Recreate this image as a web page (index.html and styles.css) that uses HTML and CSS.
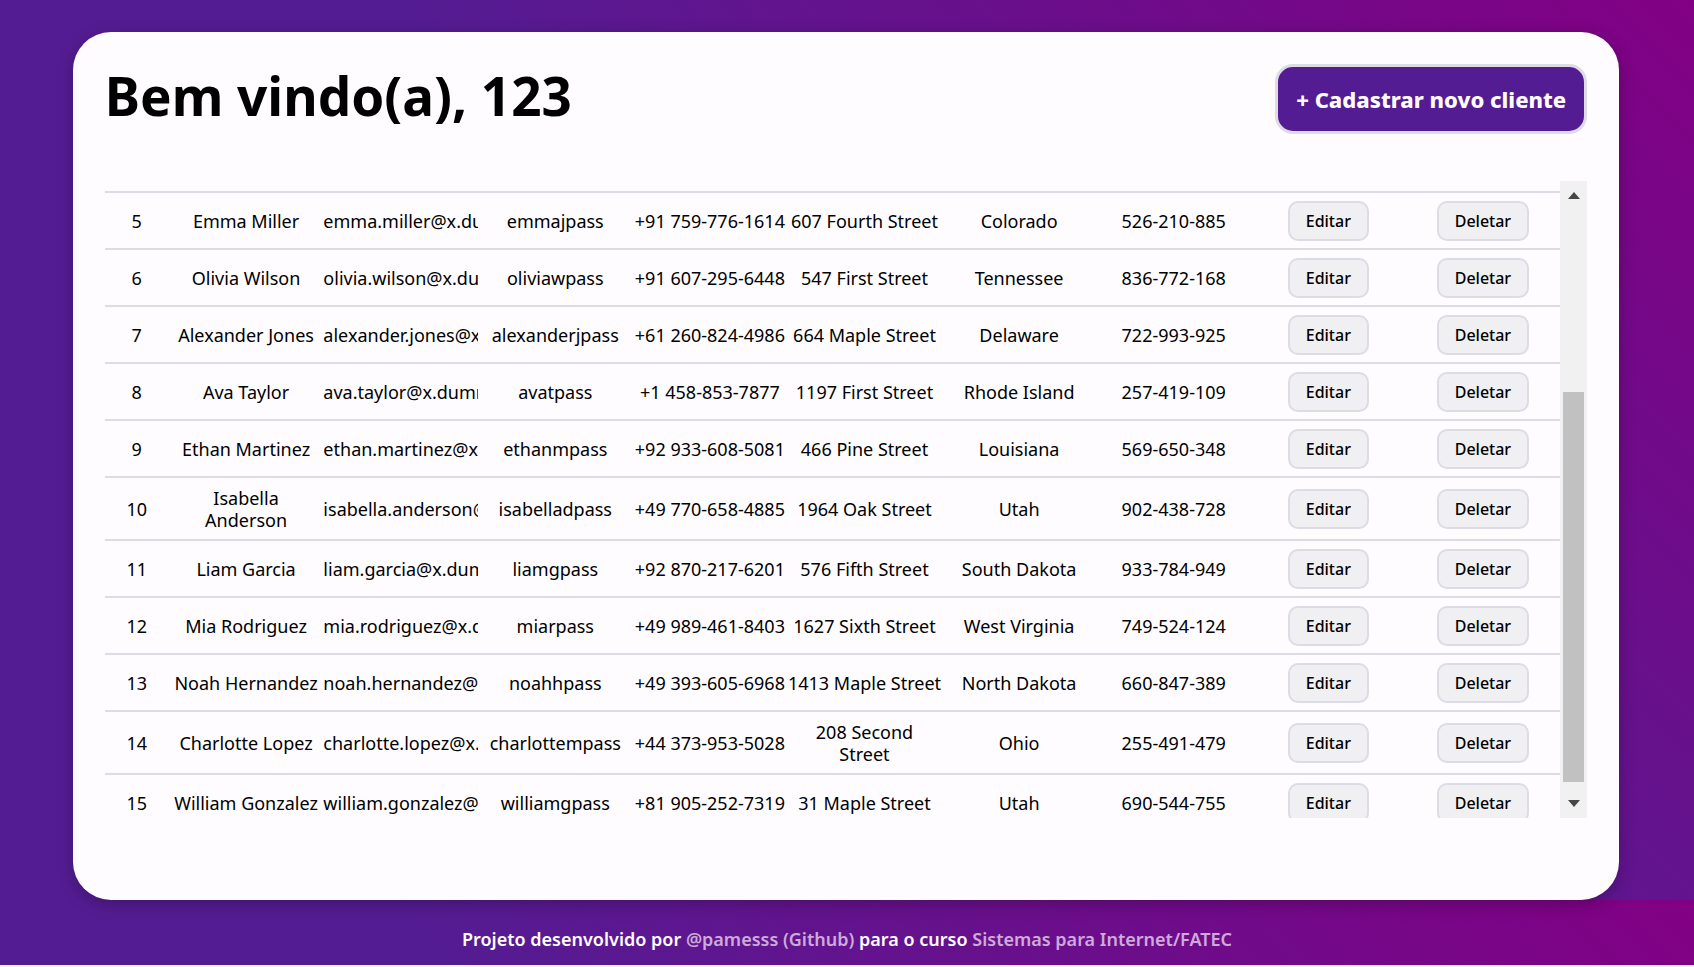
FILE: index.html
```html
<!DOCTYPE html>
<html lang="pt-BR">
<head>
<meta charset="utf-8">
<title>Clientes</title>
<link rel="stylesheet" href="styles.css">
</head>
<body>
<main class="stage">
  <section class="card">
    <header class="card-header">
      <h1 class="title">Bem vindo(a), 123</h1>
      <button class="add-button" type="button">+ Cadastrar novo cliente</button>
    </header>
    <div class="list">
      <div class="viewport">
        <table class="clients">
          <colgroup><col class="col-id"><col span="9"></colgroup>
          <tbody id="rows"></tbody>
        </table>
      </div>
      <div class="scrollbar" aria-hidden="true">
        <svg class="arrow" viewBox="0 0 12 7"><path d="M0 7 6 0l6 7z"/></svg>
        <div class="track"><div class="thumb"></div></div>
        <svg class="arrow" viewBox="0 0 12 7"><path d="M0 0h12L6 7z"/></svg>
      </div>
    </div>
  </section>
</main>
<footer class="footer">
  <p>Projeto desenvolvido por <a href="#">@pamesss (Github)</a> para o curso <a href="#">Sistemas para Internet/FATEC</a></p>
</footer>
<script src="app.js"></script>
</body>
</html>
```

FILE: styles.css
```css
* { box-sizing: border-box; }

body {
  margin: 0;
  height: 100vh;
  display: flex;
  flex-direction: column;
  background: linear-gradient(45deg, #541c92 50%, #820084) 0 0 / 100% calc(100vh - 67px);
  font-family: "Noto Sans", "Open Sans", sans-serif;
  font-size: 18px;
  color: #000;
}

.stage {
  flex: 1;
  min-height: 0;
  display: flex;
  justify-content: center;
  padding: 32px 2px 0 0;
}

.card {
  width: 91.4%;
  display: flex;
  flex-direction: column;
  padding: 32px 32px 82px;
  border-radius: 38px;
  background: #fefcff;
  box-shadow: 0 4px 16px rgba(0, 0, 0, 0.25);
}

.card-header {
  display: flex;
  justify-content: space-between;
  align-items: flex-start;
  margin-bottom: 47px;
}

.title {
  margin: 0;
  font-size: 53px;
  line-height: 64px;
}

.add-button {
  height: 70px;
  padding: 0 18px;
  border: 3px solid #dddbe3;
  border-radius: 18px;
  background: #541c92;
  color: #fefcff;
  font: 800 22px/28px "Noto Sans", "Open Sans", sans-serif;
}

.list {
  flex: 1;
  min-height: 0;
  display: flex;
}

.viewport {
  flex: 1;
  overflow: hidden;
  padding-top: 10px;
}

.clients {
  width: 100%;
  table-layout: fixed;
  border-collapse: collapse;
}

.col-id { width: 64px; }

.clients td {
  height: 57px;
  padding: 0;
  border-top: 2px solid #dddbe3;
  text-align: center;
  line-height: 22px;
  white-space: nowrap;
}

.clients tr.tall td { height: 63px; }

.clients td.email {
  overflow: hidden;
  text-align: left;
}

.row-button {
  height: 40px;
  padding: 0 16px;
  border: 2px solid #dddbe3;
  border-radius: 10px;
  background: #f0f0f2;
  color: #000;
  font: 500 16px "Noto Sans", "Open Sans", sans-serif;
}

.scrollbar {
  width: 27px;
  display: flex;
  flex-direction: column;
  align-items: center;
  justify-content: space-between;
  padding: 11px 0;
  background: #f1f1f1;
}

.arrow {
  width: 12px;
  height: 7px;
  fill: #464646;
}

.track {
  flex: 1;
  width: 21px;
  margin: 18px 0;
  display: flex;
  align-items: flex-end;
}

.thumb {
  width: 100%;
  height: 69%;
  background: #c1c1c1;
}

.footer {
  height: 67px;
  padding-top: 28px;
  border-bottom: 2px solid #f4f4f4;
  color: #fefcff;
  font-weight: 600;
  text-align: center;
}

.footer p { margin: 0; line-height: 22px; }
.footer a { color: #ceaadb; text-decoration: none; }
```

FILE: app.js
```js
const clients = [
  [5, "Emma Miller", "emma.miller@x.dummyjson.com", "emmajpass", "+91 759-776-1614", "607 Fourth Street", "Colorado", "526-210-885"],
  [6, "Olivia Wilson", "olivia.wilson@x.dummyjson.com", "oliviawpass", "+91 607-295-6448", "547 First Street", "Tennessee", "836-772-168"],
  [7, "Alexander Jones", "alexander.jones@x.dummyjson.com", "alexanderjpass", "+61 260-824-4986", "664 Maple Street", "Delaware", "722-993-925"],
  [8, "Ava Taylor", "ava.taylor@x.dummyjson.com", "avatpass", "+1 458-853-7877", "1197 First Street", "Rhode Island", "257-419-109"],
  [9, "Ethan Martinez", "ethan.martinez@x.dummyjson.com", "ethanmpass", "+92 933-608-5081", "466 Pine Street", "Louisiana", "569-650-348"],
  [10, "Isabella<br>Anderson", "isabella.anderson@x.dummyjson.com", "isabelladpass", "+49 770-658-4885", "1964 Oak Street", "Utah", "902-438-728"],
  [11, "Liam Garcia", "liam.garcia@x.dummyjson.com", "liamgpass", "+92 870-217-6201", "576 Fifth Street", "South Dakota", "933-784-949"],
  [12, "Mia Rodriguez", "mia.rodriguez@x.dummyjson.com", "miarpass", "+49 989-461-8403", "1627 Sixth Street", "West Virginia", "749-524-124"],
  [13, "Noah Hernandez", "noah.hernandez@x.dummyjson.com", "noahhpass", "+49 393-605-6968", "1413 Maple Street", "North Dakota", "660-847-389"],
  [14, "Charlotte Lopez", "charlotte.lopez@x.dummyjson.com", "charlottempass", "+44 373-953-5028", "208 Second<br>Street", "Ohio", "255-491-479"],
  [15, "William Gonzalez", "william.gonzalez@x.dummyjson.com", "williamgpass", "+81 905-252-7319", "31 Maple Street", "Utah", "690-544-755"]
];

document.getElementById("rows").innerHTML = clients.map(client => {
  const tall = client.some(value => String(value).includes("<br>"));
  const cells = client.map((value, i) => `<td${i === 2 ? ' class="email"' : ""}>${value}</td>`).join("");
  return `<tr${tall ? ' class="tall"' : ""}>${cells}
    <td><button class="row-button" type="button">Editar</button></td>
    <td><button class="row-button" type="button">Deletar</button></td></tr>`;
}).join("");
```
